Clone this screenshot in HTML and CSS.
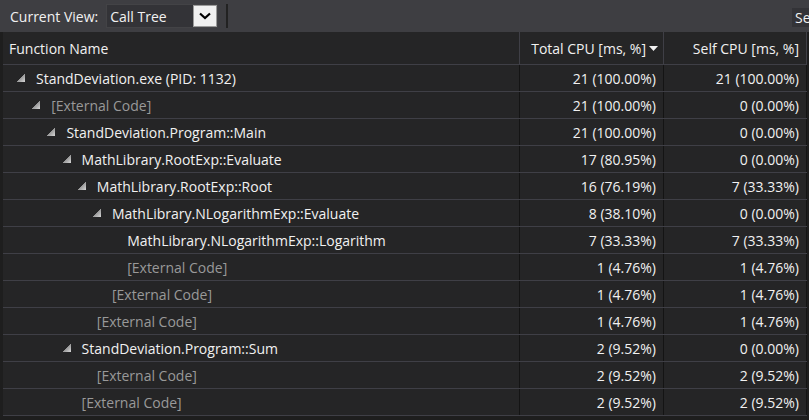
FILE: index.html
```html
<!DOCTYPE html>
<html>
<head>
<meta charset="utf-8">
<link rel="stylesheet" href="styles.css">
</head>
<body>
<div class="toolbar">
  <span class="label">Current View:</span>
  <div class="combo">
    <span class="combo-text">Call Tree</span>
    <span class="combo-btn"><svg width="12" height="8" viewBox="0 0 12 8"><path d="M1 1.5 L6 6 L11 1.5" fill="none" stroke="#000" stroke-width="2.2"/></svg></span>
  </div>
  <span class="sep"></span>
  <span class="spacer"></span>
  <span class="search">Se</span>
</div>
<div class="grid">
  <div class="hrow">
    <div class="hc name">Function Name</div>
    <div class="hc num">Total CPU [ms, %]<svg class="sort" width="9" height="5" viewBox="0 0 9 5"><path d="M0 0 H9 L4.5 5 Z" fill="#f1f1f1"/></svg></div>
    <div class="hc num self">Self CPU [ms, %]</div>
  </div>
  <div class="row"><div class="c name" style="--lv:0"><span class="tri"></span><span>StandDeviation.exe (PID: 1132)</span></div><div class="c num">21 (100.00%)</div><div class="c num">21 (100.00%)</div></div>
  <div class="row"><div class="c name ext" style="--lv:1"><span class="tri"></span><span>[External Code]</span></div><div class="c num">21 (100.00%)</div><div class="c num">0 (0.00%)</div></div>
  <div class="row"><div class="c name" style="--lv:2"><span class="tri"></span><span>StandDeviation.Program::Main</span></div><div class="c num">21 (100.00%)</div><div class="c num">0 (0.00%)</div></div>
  <div class="row"><div class="c name" style="--lv:3"><span class="tri"></span><span>MathLibrary.RootExp::Evaluate</span></div><div class="c num">17 (80.95%)</div><div class="c num">0 (0.00%)</div></div>
  <div class="row"><div class="c name" style="--lv:4"><span class="tri"></span><span>MathLibrary.RootExp::Root</span></div><div class="c num">16 (76.19%)</div><div class="c num">7 (33.33%)</div></div>
  <div class="row"><div class="c name" style="--lv:5"><span class="tri"></span><span>MathLibrary.NLogarithmExp::Evaluate</span></div><div class="c num">8 (38.10%)</div><div class="c num">0 (0.00%)</div></div>
  <div class="row"><div class="c name" style="--lv:6"><span class="tri none"></span><span>MathLibrary.NLogarithmExp::Logarithm</span></div><div class="c num">7 (33.33%)</div><div class="c num">7 (33.33%)</div></div>
  <div class="row"><div class="c name ext" style="--lv:6"><span class="tri none"></span><span>[External Code]</span></div><div class="c num">1 (4.76%)</div><div class="c num">1 (4.76%)</div></div>
  <div class="row"><div class="c name ext" style="--lv:5"><span class="tri none"></span><span>[External Code]</span></div><div class="c num">1 (4.76%)</div><div class="c num">1 (4.76%)</div></div>
  <div class="row"><div class="c name ext" style="--lv:4"><span class="tri none"></span><span>[External Code]</span></div><div class="c num">1 (4.76%)</div><div class="c num">1 (4.76%)</div></div>
  <div class="row"><div class="c name" style="--lv:3"><span class="tri"></span><span>StandDeviation.Program::Sum</span></div><div class="c num">2 (9.52%)</div><div class="c num">0 (0.00%)</div></div>
  <div class="row"><div class="c name ext" style="--lv:4"><span class="tri none"></span><span>[External Code]</span></div><div class="c num">2 (9.52%)</div><div class="c num">2 (9.52%)</div></div>
  <div class="row"><div class="c name ext" style="--lv:3"><span class="tri none"></span><span>[External Code]</span></div><div class="c num">2 (9.52%)</div><div class="c num">2 (9.52%)</div></div>
</div>
</body>
</html>
```
FILE: styles.css
```css
* { box-sizing: border-box; }
html, body { margin: 0; padding: 0; }
body {
  width: 809px;
  height: 420px;
  overflow: hidden;
  background: #1e1e1e;
  font-family: "Open Sans", "Noto Sans", sans-serif;
  font-size: 14px;
  color: #f1f1f1;
}
.toolbar {
  height: 32px;
  background: #3e3e42;
  display: flex;
  align-items: center;
  padding-left: 10px;
}
.label { margin-right: 8px; }
.combo {
  width: 112px;
  height: 24px;
  background: #333337;
  border: 1px solid #434346;
  display: flex;
  align-items: center;
  justify-content: space-between;
  padding-left: 3px;
}
.combo-btn {
  width: 24px;
  height: 22px;
  background: #f0f0f0;
  border: 1px solid #9a9a9a;
  display: flex;
  align-items: center;
  justify-content: center;
}
.sep {
  width: 2px;
  height: 24px;
  background: #222222;
  margin-left: 8px;
}
.spacer { flex: 1; }
.search {
  width: 17px;
  height: 19px;
  background: #333337;
  padding-left: 3px;
  line-height: 19px;
  overflow: hidden;
  margin-top: 3px;
}
.grid {
  margin-left: 3px;
  background: #252526;
  width: 804px;
}
.hrow, .row {
  display: grid;
  grid-template-columns: 517px 144px 143px;
}
.hrow {
  height: 33px;
  border-bottom: 1px solid #3f3f46;
}
.row {
  height: 27px;
  border-bottom: 1px solid #3f3f46;
}
.hc, .c {
  display: flex;
  align-items: center;
  white-space: nowrap;
  overflow: hidden;
}
.hc { border-right: 1px solid #3f3f46; }
.c { border-right: 1px solid #141414; }
.hc.name { padding-left: 6px; }
.num { justify-content: flex-end; padding-right: 6px; }
.hc.num { padding-right: 5px; }
.hc.self { padding-right: 7px; }
.sort { margin-left: 3px; margin-top: 1px; }
.c.name { padding-left: calc(14px + var(--lv) * 15.2px); }
.c.num { padding-right: 7px; }
.ext { color: #999999; }
.tri {
  width: 8px;
  height: 8px;
  margin-right: 11px;
  flex: none;
  background: linear-gradient(135deg, transparent 50%, #9a9a9a 50%, #d8d8d8 100%);
}
.tri.none { background: none; }
```
